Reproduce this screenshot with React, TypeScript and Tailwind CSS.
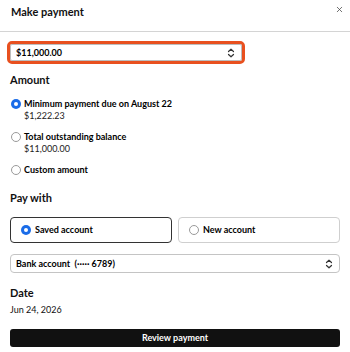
import { X } from "lucide-react";

function Chevrons() {
	return (
		<svg width="8" height="10" viewBox="0 0 8 10" fill="none" stroke="#333" strokeWidth="1.2" strokeLinecap="round" strokeLinejoin="round">
			<path d="M1.5 3.5 L4 1.2 L6.5 3.5" />
			<path d="M1.5 6.5 L4 8.8 L6.5 6.5" />
		</svg>
	);
}

function Radio({ checked }: { checked?: boolean }) {
	return checked ? (
		<span className="flex size-[10px] shrink-0 items-center justify-center rounded-full bg-[#1a6ce8]">
			<span className="block size-[4px] rounded-full bg-white" />
		</span>
	) : (
		<span className="block size-[10px] shrink-0 rounded-full border border-[#9a9a9a] bg-white" />
	);
}

function AmountOption({ label, value, checked }: { label: string; value?: string; checked?: boolean }) {
	return (
		<div className="flex gap-[3px] pl-[1px]">
			<div className="pt-[1px]">
				<Radio checked={checked} />
			</div>
			<div className="flex flex-col">
				<span className="text-[9px] font-bold leading-[12px] text-black">{label}</span>
				{value && <span className="text-[9px] leading-[12px] text-[#222]">{value}</span>}
			</div>
		</div>
	);
}

export default function App() {
	return (
		<div className="h-[352px] w-[350px] overflow-hidden bg-white text-[#111]" style={{ fontFamily: "Lato, 'Noto Sans', sans-serif" }}>
			<div className="flex h-[32px] items-start justify-between border-b border-[#d4d4d4] pl-[11px] pr-[6px] pt-[4px]">
				<span className="text-[11px] font-bold leading-[16px]">Make payment</span>
				<X className="mt-[1px] size-[9px] text-[#444]" strokeWidth={2} />
			</div>
			<div className="px-[10px]">
				<div className="-ml-[3px] mt-[9px] w-[238px] rounded-[5px] border-[3px] border-[#e8501f]">
					<div className="flex h-[17px] items-center justify-between rounded-[2px] border border-[#bdbdbd] pl-[5px] pr-[6px]">
						<span className="text-[9px] font-bold text-black">$11,000.00</span>
						<Chevrons />
					</div>
				</div>
				<div className="mt-[9px] text-[11px] font-bold leading-[14px]">Amount</div>
				<div className="mt-[11px] flex flex-col gap-[9px]">
					<AmountOption checked label="Minimum payment due on August 22" value="$1,222.23" />
					<AmountOption label="Total outstanding balance" value="$11,000.00" />
					<AmountOption label="Custom amount" />
				</div>
				<div className="mt-[15px] text-[11px] font-bold leading-[14px]">Pay with</div>
				<div className="mt-[12px] flex gap-[6px]">
					<div className="flex h-[26px] flex-1 items-center gap-[4px] rounded-[4px] border border-[#333] pl-[10px]">
						<Radio checked />
						<span className="text-[9px] font-bold text-black">Saved account</span>
					</div>
					<div className="flex h-[26px] flex-1 items-center gap-[4px] rounded-[4px] border border-[#cfcfcf] pl-[10px]">
						<Radio />
						<span className="text-[9px] font-bold text-black">New account</span>
					</div>
				</div>
				<div className="mt-[11px] flex h-[19px] items-center justify-between rounded-[4px] border border-[#c4c4c4] pl-[5px] pr-[6px]">
					<span className="text-[9px] font-bold text-black">Bank account&nbsp; (····· 6789)</span>
					<Chevrons />
				</div>
				<div className="mt-[13px] text-[11px] font-bold leading-[14px]">Date</div>
				<div className="mt-[4px] text-[9px] leading-[12px]">Jun 24, 2026</div>
				<button className="mt-[13px] flex h-[18px] w-full items-center justify-center rounded-[3px] bg-[#111] text-[9px] font-bold text-white">
					Review payment
				</button>
			</div>
		</div>
	);
}
